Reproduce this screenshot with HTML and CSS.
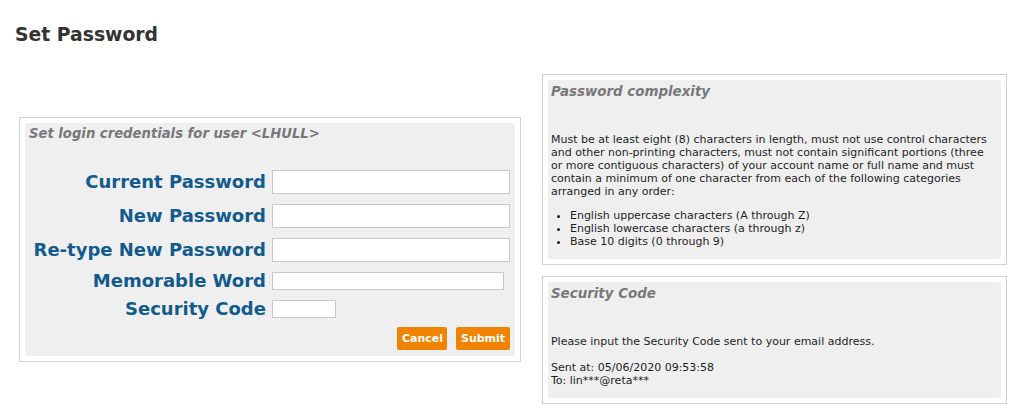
FILE: index.html
```html
<!DOCTYPE html>
<html>
<head>
<meta charset="utf-8">
<link rel="stylesheet" href="styles.css">
</head>
<body>
<div class="page">
  <h1 class="title">Set Password</h1>
  <div class="columns">
    <div class="panel panel-login">
      <div class="panel-inner">
        <h3 class="panel-heading">Set login credentials for user &lt;LHULL&gt;</h3>
        <form class="login-form">
          <label class="field-label">Current Password</label>
          <div class="field"><input class="input input-large" type="password"></div>
          <label class="field-label">New Password</label>
          <div class="field"><input class="input input-large" type="password"></div>
          <label class="field-label">Re-type New Password</label>
          <div class="field"><input class="input input-large" type="password"></div>
          <label class="field-label">Memorable Word</label>
          <div class="field"><input class="input input-medium" type="text"></div>
          <label class="field-label">Security Code</label>
          <div class="field"><input class="input input-small" type="text"></div>
          <div class="actions">
            <button type="button" class="btn">Cancel</button>
            <button type="button" class="btn">Submit</button>
          </div>
        </form>
      </div>
    </div>
    <div class="side">
      <div class="panel panel-complexity">
        <div class="panel-inner">
          <h3 class="panel-heading">Password complexity</h3>
          <p class="body-text">Must be at least eight (8) characters in length, must not use control characters and other non-printing characters, must not contain significant portions (three or more contiguous characters) of your account name or full name and must contain a minimum of one character from each of the following categories arranged in any order:</p>
          <ul class="rules">
            <li>English uppercase characters (A through Z)</li>
            <li>English lowercase characters (a through z)</li>
            <li>Base 10 digits (0 through 9)</li>
          </ul>
        </div>
      </div>
      <div class="panel panel-code">
        <div class="panel-inner">
          <h3 class="panel-heading">Security Code</h3>
          <p class="body-text code-intro">Please input the Security Code sent to your email address.</p>
          <p class="body-text code-meta">Sent at: 05/06/2020 09:53:58<br>To: lin***@reta***</p>
        </div>
      </div>
    </div>
  </div>
</div>
</body>
</html>
```

FILE: styles.css
```css
html, body {
  margin: 0;
  padding: 0;
  background: #ffffff;
}
body {
  font-family: "DejaVu Sans", Verdana, sans-serif;
  color: #222;
}
.page {
  padding: 0 0 0 15px;
  width: 992px;
}
.title {
  margin: 0;
  padding-top: 24px;
  height: 50px;
  box-sizing: border-box;
  font-size: 18.8px;
  line-height: 22px;
  font-weight: bold;
  color: #333;
}
.columns {
  display: flex;
  align-items: center;
  gap: 21px;
  padding-left: 4px;
  margin-top: 24px;
}
.panel {
  border: 1px solid #d3d3d3;
  padding: 5px;
  background: #fff;
}
.panel-inner {
  background: #efefef;
  border-radius: 3px;
}
.panel-login {
  width: 491px;
}
.side {
  width: 466px;
  display: flex;
  flex-direction: column;
  gap: 11px;
}
.panel-heading {
  margin: 0;
  padding: 4px 3px 0;
  font-size: 13.4px;
  line-height: 16px;
  font-weight: bold;
  font-style: italic;
  color: #787878;
}
.panel-login .panel-inner {
  padding: 0 5px 5px 0;
  height: 233px;
  box-sizing: border-box;
}
.panel-login .panel-heading {
  padding: 3px 3px 0 4px;
  font-size: 13.2px;
}
.login-form {
  display: grid;
  grid-template-columns: 1fr 238px;
  column-gap: 6px;
  row-gap: 10px;
  align-items: center;
  margin-top: 28px;
}
.field-label {
  text-align: right;
  font-size: 18px;
  font-weight: bold;
  color: #125b8c;
  line-height: 18px;
  white-space: nowrap;
}
.field {
  display: flex;
}
.input {
  box-sizing: border-box;
  border: 1px solid #c8c8c8;
  background: #fff;
  margin: 0;
  padding: 0 3px;
}
.input-large { width: 238px; height: 24px; }
.input-medium { width: 232px; height: 18px; }
.input-small { width: 64px; height: 18px; }
.actions {
  grid-column: 1 / -1;
  display: flex;
  justify-content: flex-end;
  gap: 9px;
  margin-top: -1px;
}
.btn {
  background: #f08300;
  color: #fff;
  border: none;
  border-radius: 2px;
  height: 23px;
  padding: 0 5px;
  font-family: "DejaVu Sans", Verdana, sans-serif;
  font-size: 11px;
  font-weight: bold;
}
.btn:first-child { width: 50px; }
.btn:last-child { width: 54px; }
.body-text {
  font-family: "DejaVu Sans", Verdana, sans-serif;
  font-size: 11px;
  line-height: 13px;
  margin: 0;
  padding: 0 3px;
  color: #1e1e1e;
}
.panel-complexity .panel-inner {
  height: 179px;
  box-sizing: border-box;
}
.panel-complexity .body-text {
  margin-top: 33px;
}
.rules {
  font-family: "DejaVu Sans", Verdana, sans-serif;
  font-size: 11px;
  line-height: 13px;
  margin: 11px 0 0;
  padding-left: 22px;
  color: #1e1e1e;
}
.panel-code .panel-inner {
  height: 116px;
  box-sizing: border-box;
}
.code-intro {
  margin-top: 33px;
}
.code-meta {
  margin-top: 13px;
}
```
